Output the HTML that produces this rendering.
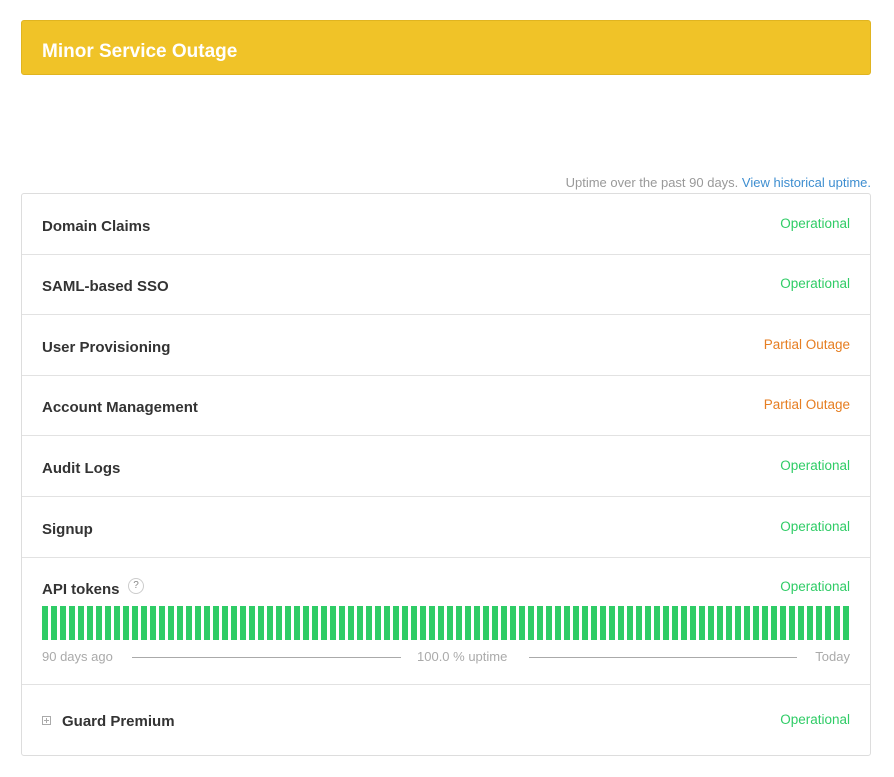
<!DOCTYPE html>
<html><head><style>
body{margin:0;background:#fff;font-family:"Liberation Sans",sans-serif;width:894px;height:777px;position:relative;overflow:hidden}
.hdr{position:absolute;left:21px;top:20px;background:#f0c328;border:1px solid #e0b420;border-radius:3px;color:#fff;font-weight:bold;font-size:19px;line-height:53px;padding-left:20px;padding-top:4px;box-sizing:border-box;width:850px;height:55px}
.up{position:absolute;right:23px;top:175px;font-size:13px;color:#999}
.up a{color:#3e8ed0;text-decoration:none}
.box{position:absolute;left:21px;top:193px;width:850px;height:563px;border:1px solid #ddd;border-radius:3px;box-sizing:border-box}
.line{position:absolute;left:22px;width:848px;height:1px;background:#e2e2e2}
.n{position:absolute;left:42px;font-size:15px;font-weight:bold;color:#333}
.s{position:absolute;right:44px;font-size:13.5px}
.g{color:#2fcc66}.o{color:#e67e22}
.bars{position:absolute;left:42px;top:606px;width:808px;height:34px;display:flex;justify-content:space-between}
.bars i{display:block;width:6px;height:34px;background:#2fcc66}
.lg{position:absolute;top:649px;font-size:13px;color:#aaa}
.hl{position:absolute;top:657px;height:1px;background:#aaa}
</style></head><body>
<div class="hdr">Minor Service Outage</div>
<div class="up">Uptime over the past 90 days. <a>View historical uptime.</a></div>
<div class="box"></div>
<div class="line" style="top:254px"></div>
<div class="line" style="top:314px"></div>
<div class="line" style="top:375px"></div>
<div class="line" style="top:435px"></div>
<div class="line" style="top:496px"></div>
<div class="line" style="top:557px"></div>
<div class="line" style="top:684px"></div>
<div class="n" style="top:218px">Domain Claims</div><div class="s g" style="top:216px">Operational</div>
<div class="n" style="top:278px">SAML-based SSO</div><div class="s g" style="top:276px">Operational</div>
<div class="n" style="top:339px">User Provisioning</div><div class="s o" style="top:337px">Partial Outage</div>
<div class="n" style="top:399px">Account Management</div><div class="s o" style="top:397px">Partial Outage</div>
<div class="n" style="top:460px">Audit Logs</div><div class="s g" style="top:458px">Operational</div>
<div class="n" style="top:521px">Signup</div><div class="s g" style="top:519px">Operational</div>
<div class="n" style="top:581px">API tokens</div>
<div style="position:absolute;left:128px;top:578px;width:16px;height:16px;border:1px solid #ccc;border-radius:50%;box-sizing:border-box;font-size:10px;color:#888;text-align:center;line-height:14px">?</div>
<div class="s g" style="top:579px">Operational</div>
<div class="bars" id="b"></div>
<div class="lg" style="left:42px">90 days ago</div>
<div class="hl" style="left:132px;width:269px"></div>
<div class="lg" style="left:417px">100.0 % uptime</div>
<div class="hl" style="left:529px;width:268px"></div>
<div class="lg" style="right:44px">Today</div>
<div style="position:absolute;left:42px;top:716px;width:9px;height:9px;border:1px solid #aaa;box-sizing:border-box"><div style="position:absolute;left:1px;top:3px;width:5px;height:1px;background:#aaa"></div><div style="position:absolute;left:3px;top:1px;width:1px;height:5px;background:#aaa"></div></div>
<div class="n" style="left:62px;top:713px">Guard Premium</div><div class="s g" style="top:712px">Operational</div>
<script>var b=document.getElementById('b');for(var i=0;i<90;i++)b.appendChild(document.createElement('i'));</script>
</body></html>
